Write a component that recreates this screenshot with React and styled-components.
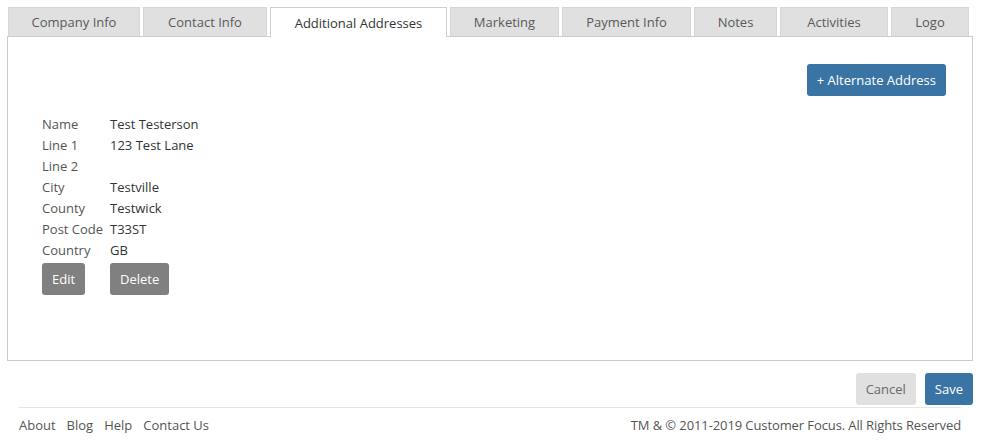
import React, { useState } from 'react';
import styled, { createGlobalStyle } from 'styled-components';

const GlobalStyle = createGlobalStyle`
  body {
    margin: 0;
    background: #fff;
    font-family: 'Open Sans', 'Liberation Sans', sans-serif;
    font-size: 13px;
    color: #444;
  }
`;

const Page = styled.div`
  padding: 7px 9px 0 7px;
`;

const TabBar = styled.div`
  display: flex;
  gap: 3px;
  padding-left: 1px;
  position: relative;
  z-index: 1;
  margin-bottom: -1px;
`;

const Tab = styled.button`
  width: ${props => props.w}px;
  height: ${props => (props.active ? 30 : 29)}px;
  box-sizing: border-box;
  background: ${props => (props.active ? '#fff' : '#e0e0e0')};
  border: 1px solid ${props => (props.active ? '#cfcfcf' : '#d6d6d6')};
  border-bottom: none;
  font-family: inherit;
  font-size: 13px;
  color: ${props => (props.active ? '#333' : '#5a5a5a')};
  padding: 0;
  cursor: pointer;
`;

const Panel = styled.div`
  border: 1px solid #cccccc;
  height: 325px;
  box-sizing: border-box;
  padding: 27px 26px 0 34px;
`;

const Toolbar = styled.div`
  display: flex;
  justify-content: flex-end;
`;

const Button = styled.button`
  height: 32px;
  padding: 0 ${props => props.px || 14}px;
  border: none;
  border-radius: 3px;
  font-family: inherit;
  font-size: 13px;
  cursor: pointer;
  background: ${props =>
    props.variant === 'primary' ? '#3a74a5' : props.variant === 'light' ? '#e0e0e0' : '#808080'};
  color: ${props => (props.variant === 'light' ? '#6a6a6a' : '#fff')};
`;

const AddressGrid = styled.div`
  display: grid;
  grid-template-columns: 68px auto;
  grid-auto-rows: 21px;
  align-items: center;
  margin-top: 17px;
  width: max-content;
`;

const Label = styled.div`
  color: #555;
`;

const Value = styled.div`
  color: #333;
`;

const RowButtons = styled.div`
  grid-column: ${props => props.col};
  margin-top: 3px;
  align-self: start;
`;

const Actions = styled.div`
  display: flex;
  justify-content: flex-end;
  gap: 9px;
  margin-top: 12px;
`;

const Footer = styled.footer`
  margin: 2px 12px 0 12px;
  border-top: 1px solid #e6e6e6;
  display: flex;
  justify-content: space-between;
  align-items: center;
  height: 34px;
  color: #555;
`;

const Links = styled.nav`
  display: flex;
  gap: 11px;
`;

const Link = styled.a`
  color: #555;
  text-decoration: none;
`;

const Copyright = styled.span`
  letter-spacing: -0.1px;
`;

const tabs = [
  ['Company Info', 132],
  ['Contact Info', 124],
  ['Additional Addresses', 177],
  ['Marketing', 109],
  ['Payment Info', 129],
  ['Notes', 83],
  ['Activities', 108],
  ['Logo', 78],
];

const address = [
  ['Name', 'Test Testerson'],
  ['Line 1', '123 Test Lane'],
  ['Line 2', ''],
  ['City', 'Testville'],
  ['County', 'Testwick'],
  ['Post Code', 'T33ST'],
  ['Country', 'GB'],
];

const App = () => {
  const [active, setActive] = useState('Additional Addresses');

  return (
    <Page>
      <GlobalStyle />
      <TabBar>
        {tabs.map(([name, w]) => (
          <Tab key={name} w={w} active={active === name} onClick={() => setActive(name)}>
            {name}
          </Tab>
        ))}
      </TabBar>
      <Panel>
        <Toolbar>
          <Button variant="primary" px={10}>+ Alternate Address</Button>
        </Toolbar>
        <AddressGrid>
          {address.map(([label, value]) => (
            <React.Fragment key={label}>
              <Label>{label}</Label>
              <Value>{value}</Value>
            </React.Fragment>
          ))}
          <RowButtons col={1}>
            <Button px={10}>Edit</Button>
          </RowButtons>
          <RowButtons col={2}>
            <Button px={10}>Delete</Button>
          </RowButtons>
        </AddressGrid>
      </Panel>
      <Actions>
        <Button variant="light" px={10}>Cancel</Button>
        <Button variant="primary" px={10}>Save</Button>
      </Actions>
      <Footer>
        <Links>
          <Link href="#">About</Link>
          <Link href="#">Blog</Link>
          <Link href="#">Help</Link>
          <Link href="#">Contact Us</Link>
        </Links>
        <Copyright>TM &amp; © 2011-2019 Customer Focus. All Rights Reserved</Copyright>
      </Footer>
    </Page>
  );
};

export default App;
